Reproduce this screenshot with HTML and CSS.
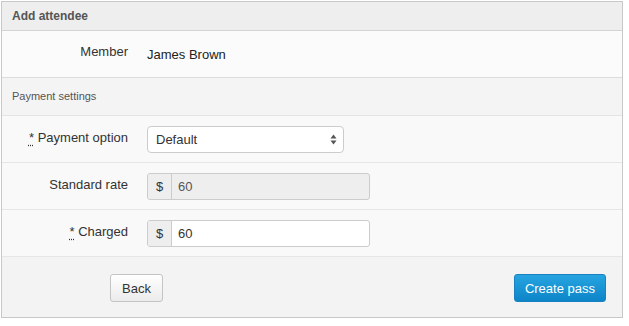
FILE: index.html
```html
<!DOCTYPE html>
<html lang="en">
<head>
  <meta charset="UTF-8" />
  <title>Add attendee</title>
  <link rel="stylesheet" href="styles.css">
</head>
<body>
  <div class="panel">
    <div class="panel-head">Add attendee</div>

    <div class="row row-member">
      <div class="label">Member</div>
      <div class="value">James Brown</div>
    </div>

    <div class="section-head">Payment settings</div>

    <div class="row">
      <div class="label"><abbr title="required">*</abbr> Payment option</div>
      <div class="control">
        <div class="select">
          <span>Default</span>
          <svg class="arrows" width="7" height="11" viewBox="0 0 7 11">
            <path d="M3.5 0.5 L6.5 4.5 L0.5 4.5 Z" fill="#555"/>
            <path d="M3.5 10.5 L6.5 6.5 L0.5 6.5 Z" fill="#555"/>
          </svg>
        </div>
      </div>
    </div>

    <div class="row">
      <div class="label">Standard rate</div>
      <div class="control">
        <div class="input-group disabled">
          <span class="addon">$</span>
          <span class="field">60</span>
        </div>
      </div>
    </div>

    <div class="row">
      <div class="label"><abbr title="required">*</abbr> Charged</div>
      <div class="control">
        <div class="input-group">
          <span class="addon">$</span>
          <span class="field">60</span>
        </div>
      </div>
    </div>

    <div class="footer">
      <button class="btn">Back</button>
      <button class="btn btn-primary">Create pass</button>
    </div>
  </div>
</body>
</html>
```

FILE: styles.css
```css
body {
  margin: 0;
  background: #fff;
  font-family: "Liberation Sans", Arial, sans-serif;
  color: #333;
}
.panel {
  margin: 1px 0 0 1px;
  width: 622px;
  box-sizing: border-box;
  border: 1px solid #c8c8c8;
  background: #f9f9f9;
}
.panel-head {
  height: 28px;
  line-height: 28px;
  padding-left: 10px;
  background: #eeeeee;
  border-bottom: 1px solid #d4d4d4;
  font-size: 12px;
  font-weight: bold;
  color: #555;
}
.row {
  display: flex;
  align-items: center;
  height: 46px;
  border-bottom: 1px solid #e6e6e6;
}
.row-member {
  background: #fbfbfb;
  border-bottom: 1px solid #dcdcdc;
}
.label {
  width: 126px;
  text-align: right;
  font-size: 13px;
  color: #333;
  align-self: flex-start;
  padding-top: 14px;
}
.row-member .label {
  padding-top: 13px;
}
.value {
  margin-left: 19px;
  font-size: 13px;
  color: #222;
  align-self: flex-start;
  padding-top: 16px;
}
abbr {
  text-decoration: underline dotted;
  text-underline-offset: 3px;
  color: #333;
}
.section-head {
  height: 37px;
  line-height: 37px;
  padding-left: 10px;
  background: #f4f4f4;
  border-bottom: 1px solid #e4e4e4;
  font-size: 11px;
  color: #555;
}
.control {
  margin-left: 19px;
}
.select {
  width: 197px;
  height: 27px;
  box-sizing: border-box;
  border: 1px solid #ccc;
  border-radius: 4px;
  background: #fff;
  display: flex;
  align-items: center;
  justify-content: space-between;
  padding: 0 6px 0 8px;
  font-size: 13px;
  color: #333;
}
.input-group {
  display: flex;
  width: 223px;
  height: 27px;
  box-sizing: border-box;
  border: 1px solid #ccc;
  border-radius: 3px;
  background: #fff;
  font-size: 13px;
  overflow: hidden;
}
.addon {
  width: 23px;
  background: #eeeeee;
  border-right: 1px solid #ccc;
  display: flex;
  align-items: center;
  justify-content: center;
  color: #333;
}
.field {
  display: flex;
  align-items: center;
  padding-left: 6px;
  color: #333;
}
.disabled {
  background: #eeeeee;
}
.disabled .field {
  color: #555;
}
.footer {
  height: 60px;
  background: #f3f3f3;
  display: flex;
  align-items: center;
  justify-content: space-between;
  padding: 0 16px 0 108px;
}
.btn {
  height: 28px;
  padding: 0 11px;
  border: 1px solid #c4c4c4;
  border-radius: 3px;
  background: linear-gradient(#ffffff, #ebebeb);
  font-family: "Liberation Sans", Arial, sans-serif;
  font-size: 13px;
  color: #333;
  margin-top: 2px;
  white-space: nowrap;
}
.btn-primary {
  padding: 0 10px;
  border-color: #1a82c0;
  background: linear-gradient(#26a4e0, #0d85c9);
  color: #fff;
}
```
